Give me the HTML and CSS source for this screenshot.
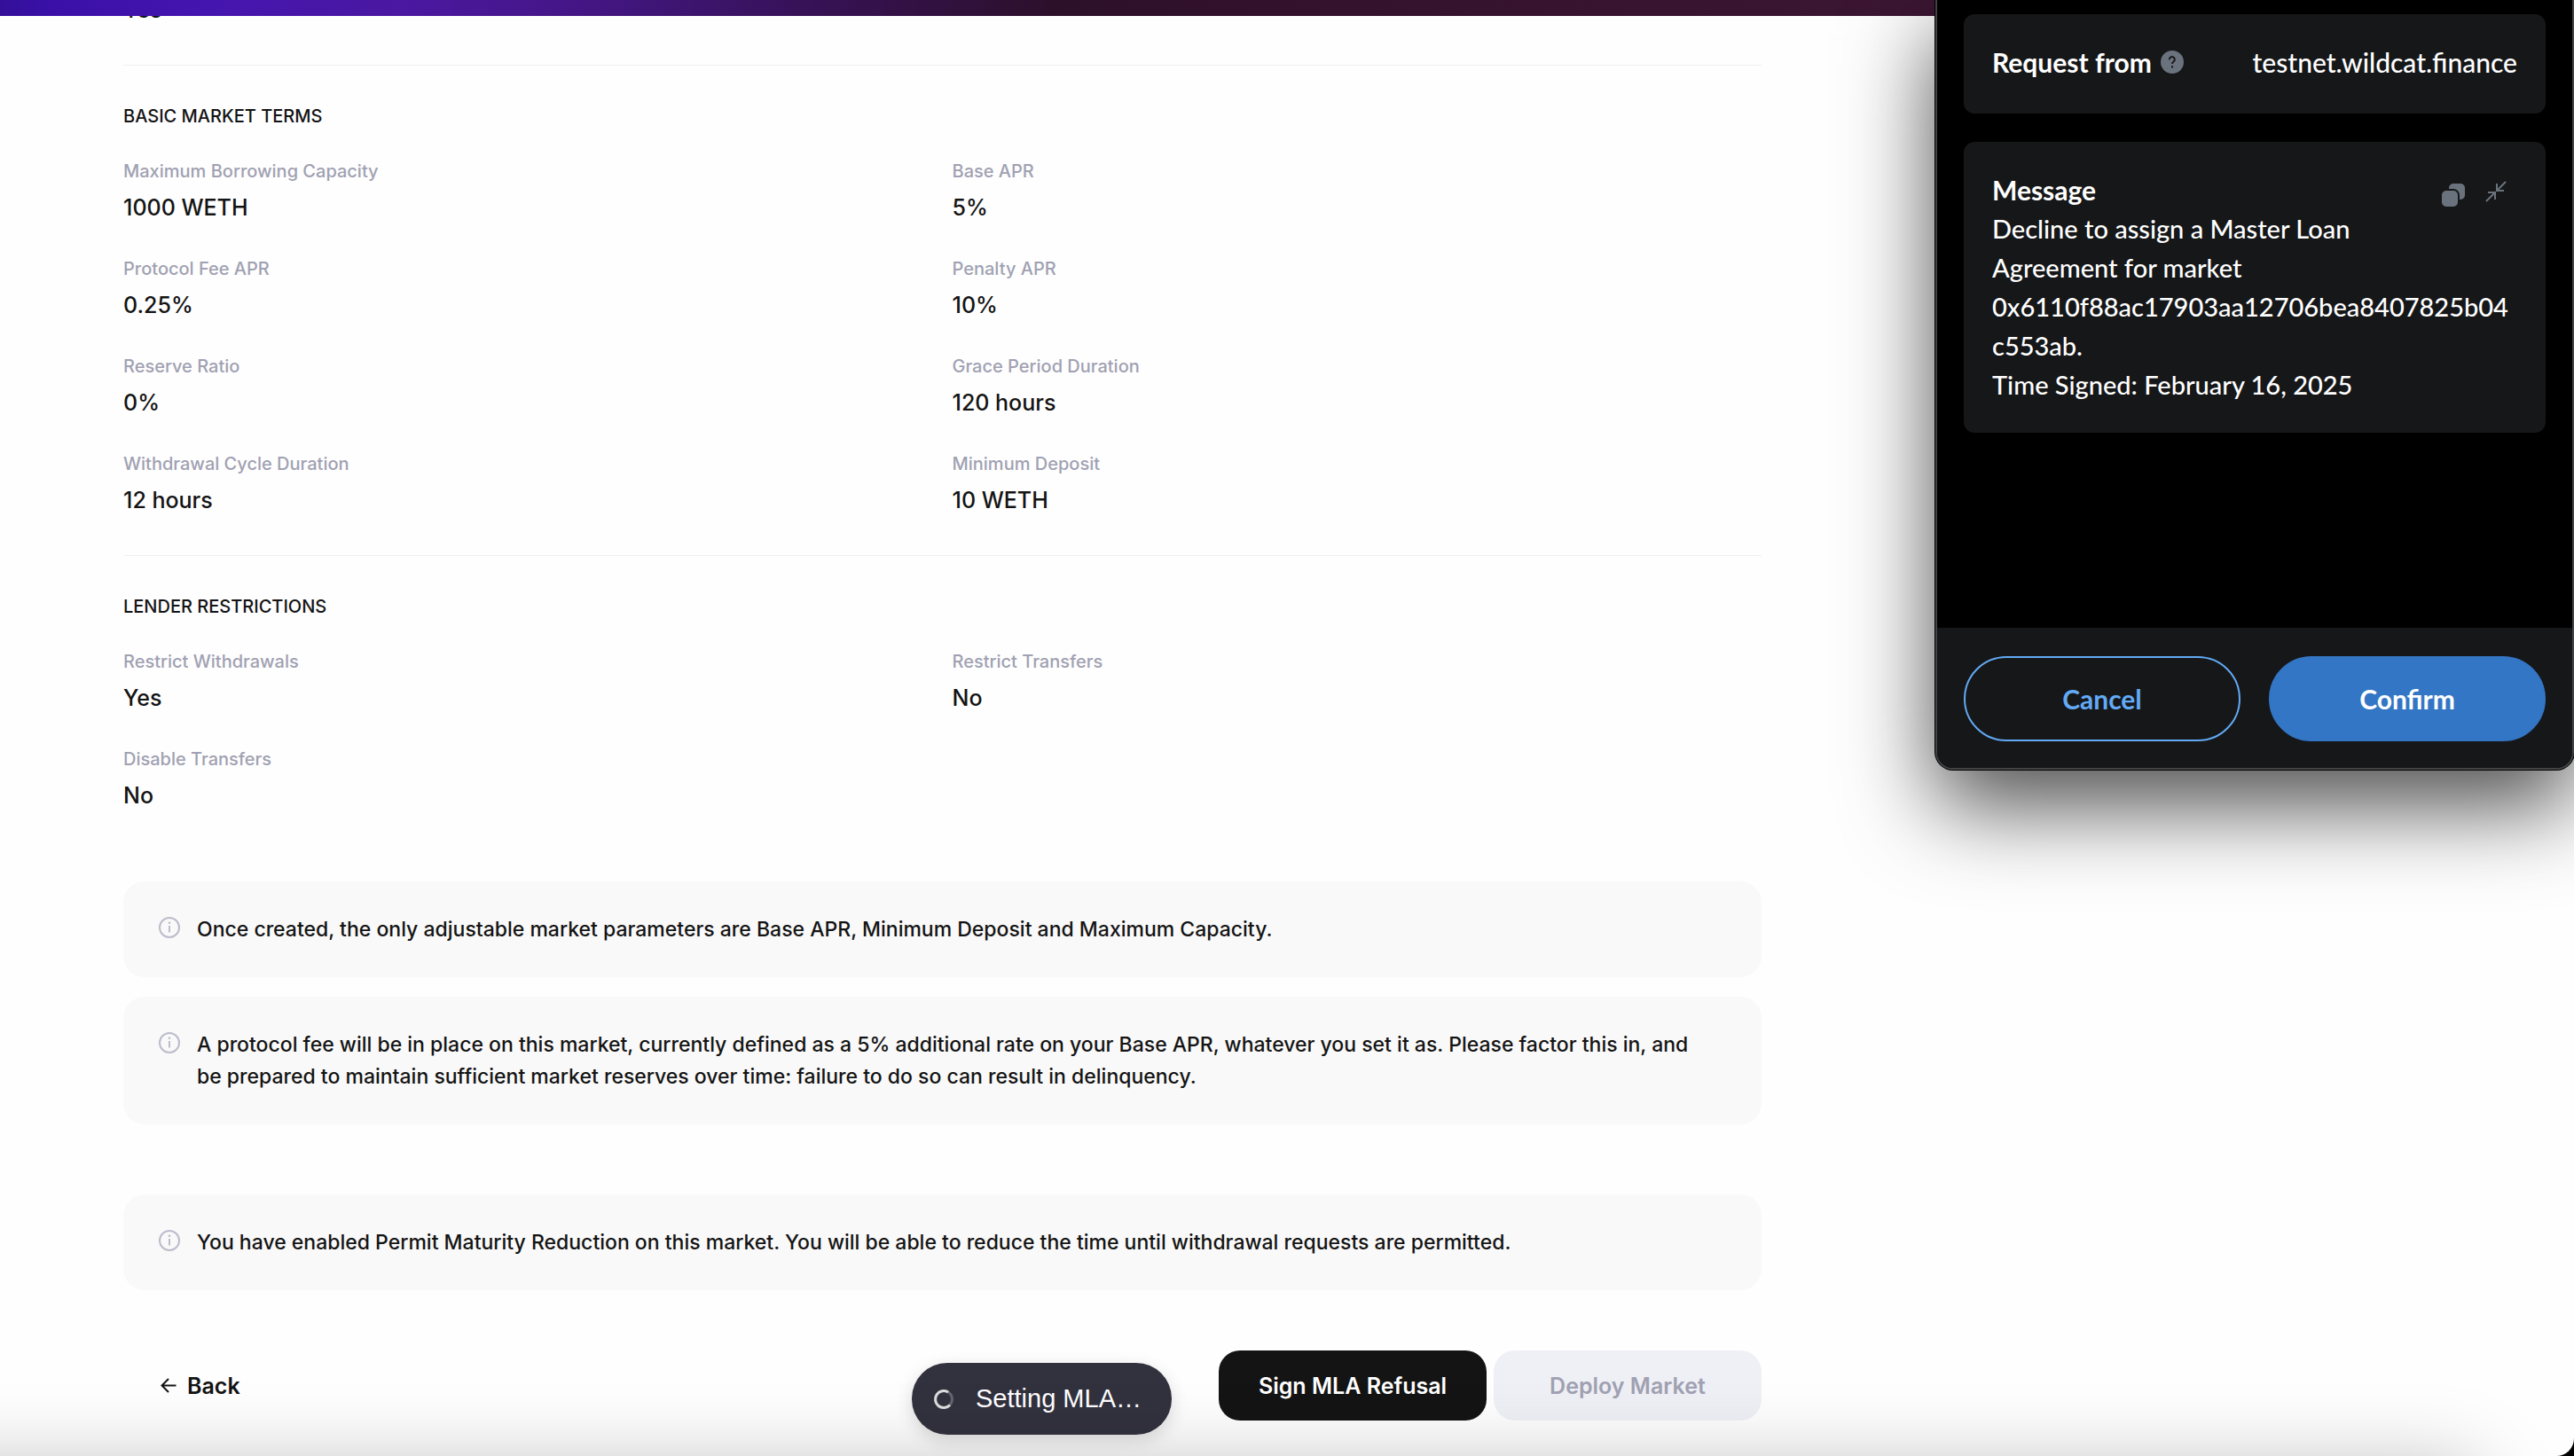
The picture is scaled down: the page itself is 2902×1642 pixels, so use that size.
FILE: index.html
```html
<!DOCTYPE html>
<html lang="en">
<head>
<meta charset="utf-8">
<title>Wildcat – Create Market</title>
<link rel="stylesheet" href="styles.css">
</head>
<body>
<div class="page">
  <header class="topbar"></header>
  <main class="review">
    <section class="section section-first">
      <dl class="terms"><div class="term"><dd>Yes</dd></div></dl>
    </section>
    <section class="section">
      <h2>BASIC MARKET TERMS</h2>
      <dl class="terms">
        <div class="term"><dt>Maximum Borrowing Capacity</dt><dd>1000 WETH</dd></div>
        <div class="term"><dt>Base APR</dt><dd>5%</dd></div>
        <div class="term"><dt>Protocol Fee APR</dt><dd>0.25%</dd></div>
        <div class="term"><dt>Penalty APR</dt><dd>10%</dd></div>
        <div class="term"><dt>Reserve Ratio</dt><dd>0%</dd></div>
        <div class="term"><dt>Grace Period Duration</dt><dd>120 hours</dd></div>
        <div class="term"><dt>Withdrawal Cycle Duration</dt><dd>12 hours</dd></div>
        <div class="term"><dt>Minimum Deposit</dt><dd>10 WETH</dd></div>
      </dl>
    </section>
    <section class="section section-last">
      <h2>LENDER RESTRICTIONS</h2>
      <dl class="terms">
        <div class="term"><dt>Restrict Withdrawals</dt><dd>Yes</dd></div>
        <div class="term"><dt>Restrict Transfers</dt><dd>No</dd></div>
        <div class="term"><dt>Disable Transfers</dt><dd>No</dd></div>
      </dl>
    </section>
    <div class="notes">
      <div class="note">
        <svg class="note-icon" viewBox="0 0 24 24" aria-hidden="true"><circle cx="12" cy="12" r="11"/><path d="M12 10v7.500"/><circle class="dot" cx="12" cy="6.800" r="1.300"/></svg>
        <p>Once created, the only adjustable market parameters are Base APR, Minimum Deposit and Maximum Capacity.</p>
      </div>
      <div class="note">
        <svg class="note-icon" viewBox="0 0 24 24" aria-hidden="true"><circle cx="12" cy="12" r="11"/><path d="M12 10v7.500"/><circle class="dot" cx="12" cy="6.800" r="1.300"/></svg>
        <p>A protocol fee will be in place on this market, currently defined as a 5% additional rate on your Base APR, whatever you set it as. Please factor this in, and be prepared to maintain sufficient market reserves over time: failure to do so can result in delinquency.</p>
      </div>
    </div>
    <div class="notes">
      <div class="note">
        <svg class="note-icon" viewBox="0 0 24 24" aria-hidden="true"><circle cx="12" cy="12" r="11"/><path d="M12 10v7.500"/><circle class="dot" cx="12" cy="6.800" r="1.300"/></svg>
        <p>You have enabled Permit Maturity Reduction on this market. You will be able to reduce the time until withdrawal requests are permitted.</p>
      </div>
    </div>
    <div class="actions">
      <button type="button" class="btn btn-back">
        <svg class="back-icon" viewBox="0 0 18 18" aria-hidden="true"><path d="M17.500 8.500H1.500M9 1L1.500 8.500l7.500 7.500"/></svg>Back</button>
      <button type="button" class="btn btn-primary">Sign MLA Refusal</button>
      <button type="button" class="btn btn-disabled" disabled>Deploy Market</button>
    </div>
  </main>

  <div class="toast" role="status">
    <svg class="spinner" viewBox="0 0 24 24" aria-hidden="true"><circle class="spinner-track" cx="12" cy="12" r="9.500"/><path d="M17 4A9.500 9.500 0 1 0 19 18.500"/></svg>
    Setting MLA…
  </div>

  <div class="dock-shadow"></div>

  <aside class="wallet">
    <div class="wallet-body">
      <div class="card request">
        <span class="request-label">Request from
          <svg class="help-icon" viewBox="0 0 26 26" aria-hidden="true"><circle cx="13" cy="13" r="13"/><path d="M9.800 10.200a3 3 0 1 1 4.700 2.300c-1.100.7-1.500 1.100-1.500 2.500M13 17.200v2.200"/></svg>
        </span>
        <span>testnet.wildcat.finance</span>
      </div>
      <div class="card">
        <div class="card-tools">
          <svg class="copy-icon" viewBox="0 0 26 26" aria-hidden="true"><rect x="8" y="0" width="18" height="18" rx="5"/><rect class="front" x="-1" y="7" width="20" height="20" rx="6"/></svg>
          <svg class="collapse-icon" viewBox="0 0 24 24" aria-hidden="true"><path d="M23 1L13 11M13 3v8h8M1 23l10-10M3 13h8v8"/></svg>
        </div>
        <h3>Message</h3>
        <p>Decline to assign a Master Loan<br>Agreement for market<br>0x6110f88ac17903aa12706bea8407825b04<br>c553ab.<br>Time Signed: February 16, 2025</p>
      </div>
    </div>
    <div class="wallet-footer">
      <button type="button" class="pill pill-outline">Cancel</button>
      <button type="button" class="pill pill-solid">Confirm</button>
    </div>
  </aside>
</div>
</body>
</html>
```
FILE: styles.css
```css
* { box-sizing: border-box; }
html { background: #000; }
body {
  margin: 0;
  font-family: Inter, "Liberation Sans", sans-serif;
  color: #141414;
}
h2, h3, p, dl, dd { margin: 0; }
button { font: inherit; cursor: pointer; }

.page {
  position: relative;
  min-height: 100vh;
  overflow: hidden;
  background: #fefefe;
  border-bottom-right-radius: 20px;
}
.topbar {
  position: relative;
  z-index: 1;
  height: 18px;
  background: linear-gradient(90deg, #33109a 0, #3a10a8 2%, #4515b0 8%, #4a18a0 16%, #431683 23%, #371258 31%, #2c102a 41%, #33112c 50%, #3c1633 75%);
}

/* Review column */
.review {
  width: 1847px;
  max-width: 100%;
  margin-left: 139px;
}
.section {
  padding: 45px 0 43px;
  border-bottom: 1px solid #efeff1;
}
.section-first { margin-top: -26px; padding-top: 0; }
.section-last { border-bottom: 0; padding-bottom: 78px; }
.section h2 {
  margin-bottom: 36px;
  font-size: 20px;
  line-height: 24px;
  font-weight: 450;
}
.terms {
  display: grid;
  grid-template-columns: 1fr 1fr;
  column-gap: 22px;
  row-gap: 36px;
}
.term { display: flex; flex-direction: column; gap: 8px; }
.term dt { font-size: 20px; line-height: 28px; font-weight: 450; color: #a0a1b2; }
.term dd { font-size: 25px; line-height: 38px; font-weight: 500; }

.notes { display: flex; flex-direction: column; gap: 22px; margin-bottom: 79px; }
.note {
  display: flex;
  align-items: flex-start;
  gap: 19px;
  padding: 36px 60px 36px 40px;
  border-radius: 24px;
  background: #f9f9f9;
}
.note p { font-size: 23px; line-height: 36px; font-weight: 500; }
.note-icon {
  flex: none;
  width: 24px;
  height: 24px;
  margin-top: 4px;
  fill: none;
  stroke: #bcbccc;
  stroke-width: 2;
}
.note-icon .dot { fill: #bcbccc; stroke: none; }

.actions { display: flex; gap: 8px; margin: -11px 0 40px; }
.btn {
  width: 302px;
  height: 79px;
  border: 0;
  border-radius: 24px;
  font-size: 25px;
  font-weight: 600;
  color: #141414;
}
.btn-back {
  display: flex;
  align-items: center;
  gap: 12px;
  width: auto;
  margin-right: auto;
  padding: 0 42px;
  background: none;
}
.back-icon { width: 18px; height: 18px; fill: none; stroke: #141414; stroke-width: 2; }
.btn-primary { background: #141414; color: #fff; }
.btn-disabled { background: #eff0f5; color: #a0a1b2; }

/* Progress toast */
.toast {
  position: absolute;
  left: 1028px;
  bottom: 24px;
  display: flex;
  align-items: center;
  gap: 24px;
  height: 81px;
  padding: 0 34px 0 24px;
  border-radius: 40px;
  background: #32313e;
  box-shadow: 0 6px 20px rgba(0, 0, 0, .14);
  color: #fff;
  font-family: "Liberation Sans", sans-serif;
  font-size: 29px;
}
.spinner { width: 24px; height: 24px; fill: none; stroke: #ddd; stroke-width: 3; }
.spinner-track { stroke: #656470; }

/* Soft shadow rising from the window's lower edge */
.dock-shadow {
  position: absolute;
  left: -200px;
  right: 110px;
  top: 100%;
  height: 200px;
  box-shadow: 0 12px 90px rgba(0, 0, 0, .26);
  pointer-events: none;
}

/* Wallet window */
.wallet {
  position: absolute;
  z-index: 2;
  top: 0;
  right: 0;
  width: 720px;
  border: 2px solid #434446;
  border-top: 0;
  border-radius: 0 0 20px 20px;
  background: #000;
  box-shadow: 0 0 0 1px #000, 0 40px 100px rgba(0, 0, 0, .7);
  color: #fff;
  font-family: Lato, "Liberation Sans", sans-serif;
  font-size: 30px;
  line-height: 44px;
  font-weight: 500;
}
.wallet-body {
  display: flex;
  flex-direction: column;
  gap: 32px;
  padding: 16px 30px 220px;
}
.card {
  position: relative;
  padding: 32px;
  border-radius: 12px;
  background: #161719;
}
.request {
  display: flex;
  justify-content: space-between;
  align-items: center;
  padding-bottom: 36px;
}
.request-label { display: flex; align-items: center; gap: 10px; font-weight: 700; }
.card h3 { font-size: 30px; font-weight: 700; }
.card p { font-size: 29px; }
.help-icon { width: 26px; height: 26px; fill: #6a737d; }
.help-icon path { fill: none; stroke: #161719; stroke-width: 2; }
.card-tools { position: absolute; top: 44px; right: 44px; display: flex; gap: 23px; }
.copy-icon { width: 26px; height: 26px; margin-top: 3px; fill: #6a737d; overflow: visible; }
.copy-icon .front { stroke: #161719; stroke-width: 2; }
.collapse-icon { width: 24px; height: 24px; fill: none; stroke: #6a737d; stroke-width: 2; }
.wallet-footer {
  display: grid;
  grid-template-columns: 1fr 1fr;
  gap: 32px;
  padding: 32px 30px 30px;
  border-radius: 0 0 18px 18px;
  background: #161719;
}
.pill {
  height: 96px;
  border: 2px solid #62aaf5;
  border-radius: 48px;
  background: none;
  color: #62aaf5;
  font-weight: 700;
}
.pill-solid { border-color: #3376c5; background: #3376c5; color: #fff; }
```
